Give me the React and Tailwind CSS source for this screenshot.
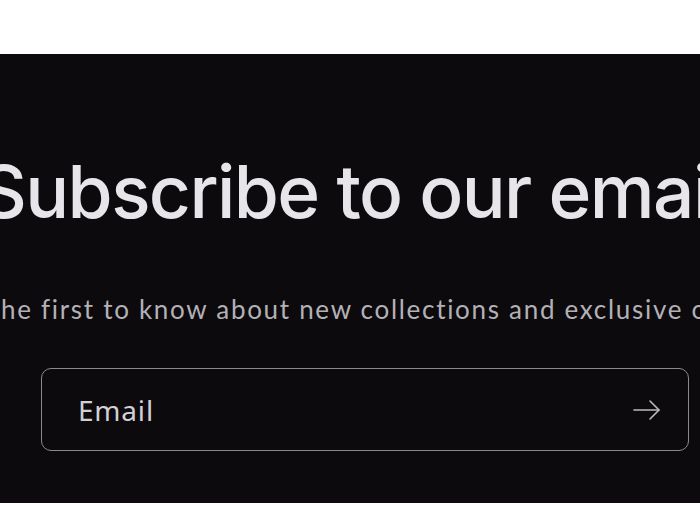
export default function App() {
  return (
    <div className="w-[700px] h-[525px] bg-white flex flex-col overflow-hidden">
      <div className="h-[54px] shrink-0" />
      <section className="h-[449px] shrink-0 bg-[#0c0a0d] overflow-hidden flex flex-col items-center pt-[98px]">
        <div className="w-full flex justify-center">
          <h2
            className="whitespace-nowrap shrink-0 text-[73px] leading-[80px] font-medium text-[#e7e5e9] tracking-[-1.6px] translate-x-[22px]"
            style={{ fontFamily: "Inter, 'Liberation Sans', sans-serif" }}
          >
            Subscribe to our emails
          </h2>
        </div>
        <div className="w-full flex justify-center mt-[60px]">
          <p
            className="whitespace-nowrap shrink-0 text-[26px] leading-[34px] text-[#b3b1b6] tracking-[1.7px] translate-x-[12px]"
            style={{ fontFamily: "Lato, 'Open Sans', sans-serif" }}
          >
            Be the first to know about new collections and exclusive offers.
          </p>
        </div>
        <div className="w-[648px] h-[83px] mt-[42px] ml-[30px] rounded-[10px] border-[1.5px] border-[#8a898d] flex items-center justify-between pl-[36px] pr-[27px]">
          <span
            className="text-[28px] text-[#d2d0d5] tracking-[0.8px]"
            style={{ fontFamily: "'Noto Sans', sans-serif" }}
          >
            Email
          </span>
          <svg width="28" height="22" viewBox="0 0 28 22" fill="none" stroke="#bdbbc0" strokeWidth="1.6" strokeLinecap="round" strokeLinejoin="round">
            <path d="M1 11 H26" />
            <path d="M17 2 L26 11 L17 20" />
          </svg>
        </div>
      </section>
    </div>
  );
}
